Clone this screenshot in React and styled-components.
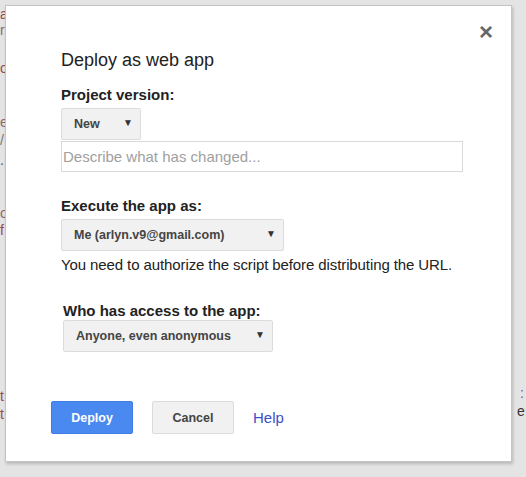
import React from "react";
import styled, { createGlobalStyle } from "styled-components";

const GlobalStyle = createGlobalStyle`
  html, body {
    margin: 0;
    padding: 0;
    background: #e4e4e4;
    font-family: Arial, "Liberation Sans", sans-serif;
  }
`;

const Page = styled.div`
  position: relative;
  width: 526px;
  height: 477px;
  overflow: hidden;
  background: #e4e4e4;
`;

const Behind = styled.div`
  display: flex;
  justify-content: space-between;
  height: 100%;
  font-size: 14px;
`;

const Gutter = styled.div`
  display: flex;
  flex-direction: column;
  width: ${({ w }) => w}px;
  overflow: hidden;
`;

const Frag = styled.span`
  display: block;
  height: 16px;
  line-height: 16px;
  margin-top: ${({ top }) => top}px;
  color: ${({ color }) => color || "#9b4a4a"};
  white-space: nowrap;
  text-indent: ${({ shift }) => shift || 0}px;
`;

const Dialog = styled.div`
  position: absolute;
  left: 5px;
  top: 5px;
  width: 507px;
  height: 457px;
  box-sizing: border-box;
  background: #fff;
  border: 1px solid #c4c4c4;
  box-shadow: 1px 2px 3px rgba(0, 0, 0, 0.2);
  padding: 42px 0 0 55px;
  color: #222;
`;

const Close = styled.span`
  position: absolute;
  right: 18px;
  top: 14px;
  font-size: 24px;
  font-weight: bold;
  color: #666;
  line-height: 24px;
`;

const Title = styled.div`
  font-size: 18px;
  line-height: 24px;
  margin-bottom: 14px;
`;

const Label = styled.div`
  font-size: 15px;
  font-weight: bold;
  line-height: 18px;
  margin-left: ${({ indent }) => indent || 0}px;
  margin-top: ${({ top }) => top || 0}px;
`;

const Select = styled.div`
  display: flex;
  align-items: center;
  justify-content: space-between;
  box-sizing: border-box;
  width: ${({ w }) => w}px;
  height: 32px;
  margin-left: ${({ indent }) => indent || 0}px;
  margin-top: ${({ top }) => top || 0}px;
  padding: 0 7px 0 12px;
  background: #f1f1f1;
  border: 1px solid #dcdcdc;
  border-radius: 2px;
  font-size: 12.5px;
  font-weight: bold;
  color: #444;
`;

const Arrow = styled.span`
  font-size: 10px;
  color: #333;
  margin-top: -4px;
`;

const Input = styled.div`
  box-sizing: border-box;
  width: 402px;
  height: 31px;
  margin-top: 1px;
  padding: 5px 1px;
  border: 1px solid #d9d9d9;
  font-size: 15px;
  line-height: 19px;
  color: #a0a0a0;
`;

const Note = styled.div`
  font-size: 15px;
  line-height: 18px;
  margin-top: 5px;
  letter-spacing: -0.1px;
`;

const Actions = styled.div`
  display: flex;
  align-items: center;
  gap: 19px;
  margin-top: 49px;
  margin-left: -10px;
`;

const Button = styled.div`
  display: flex;
  align-items: center;
  justify-content: center;
  box-sizing: border-box;
  width: 82px;
  height: 33px;
  border-radius: 2px;
  font-size: 12.5px;
  font-weight: bold;
  background: ${({ primary }) => (primary ? "#4a89f0" : "#f1f1f1")};
  color: ${({ primary }) => (primary ? "#fff" : "#444")};
  border: 1px solid ${({ primary }) => (primary ? "#3f7ce6" : "#dcdcdc")};
`;

const HelpLink = styled.span`
  font-size: 15px;
  color: #3b4fc6;
`;

const App = () => {
  return (
    <Page>
      <GlobalStyle />
      <Behind>
        <Gutter w={5}>
          <Frag top={6}>a</Frag>
          <Frag top={0} color="#8c6a6a">r</Frag>
          <Frag top={22}>o</Frag>
          <Frag top={38} color="#8c6a6a">e</Frag>
          <Frag top={2} color="#777">/</Frag>
          <Frag top={4} color="#555">.</Frag>
          <Frag top={37} color="#8c6a6a">o</Frag>
          <Frag top={1}>f</Frag>
          <Frag top={150}>t</Frag>
          <Frag top={2}>t</Frag>
        </Gutter>
        <Gutter w={10}>
          <Frag top={385} color="#666" shift={4}>:</Frag>
          <Frag top={2} color="#333" shift={1}>e</Frag>
        </Gutter>
      </Behind>
      <Dialog>
        <Close>×</Close>
        <Title>Deploy as web app</Title>
        <Label>Project version:</Label>
        <Select w={80} top={4}>
          New <Arrow>▼</Arrow>
        </Select>
        <Input>Describe what has changed...</Input>
        <Label top={25}>Execute the app as:</Label>
        <Select w={223} top={4}>
          Me (arlyn.v9@gmail.com) <Arrow>▼</Arrow>
        </Select>
        <Note>You need to authorize the script before distributing the URL.</Note>
        <Label indent={2} top={28}>Who has access to the app:</Label>
        <Select w={210} indent={2} top={0}>
          Anyone, even anonymous <Arrow>▼</Arrow>
        </Select>
        <Actions>
          <Button primary>Deploy</Button>
          <Button>Cancel</Button>
          <HelpLink>Help</HelpLink>
        </Actions>
      </Dialog>
    </Page>
  );
};

export default App;
